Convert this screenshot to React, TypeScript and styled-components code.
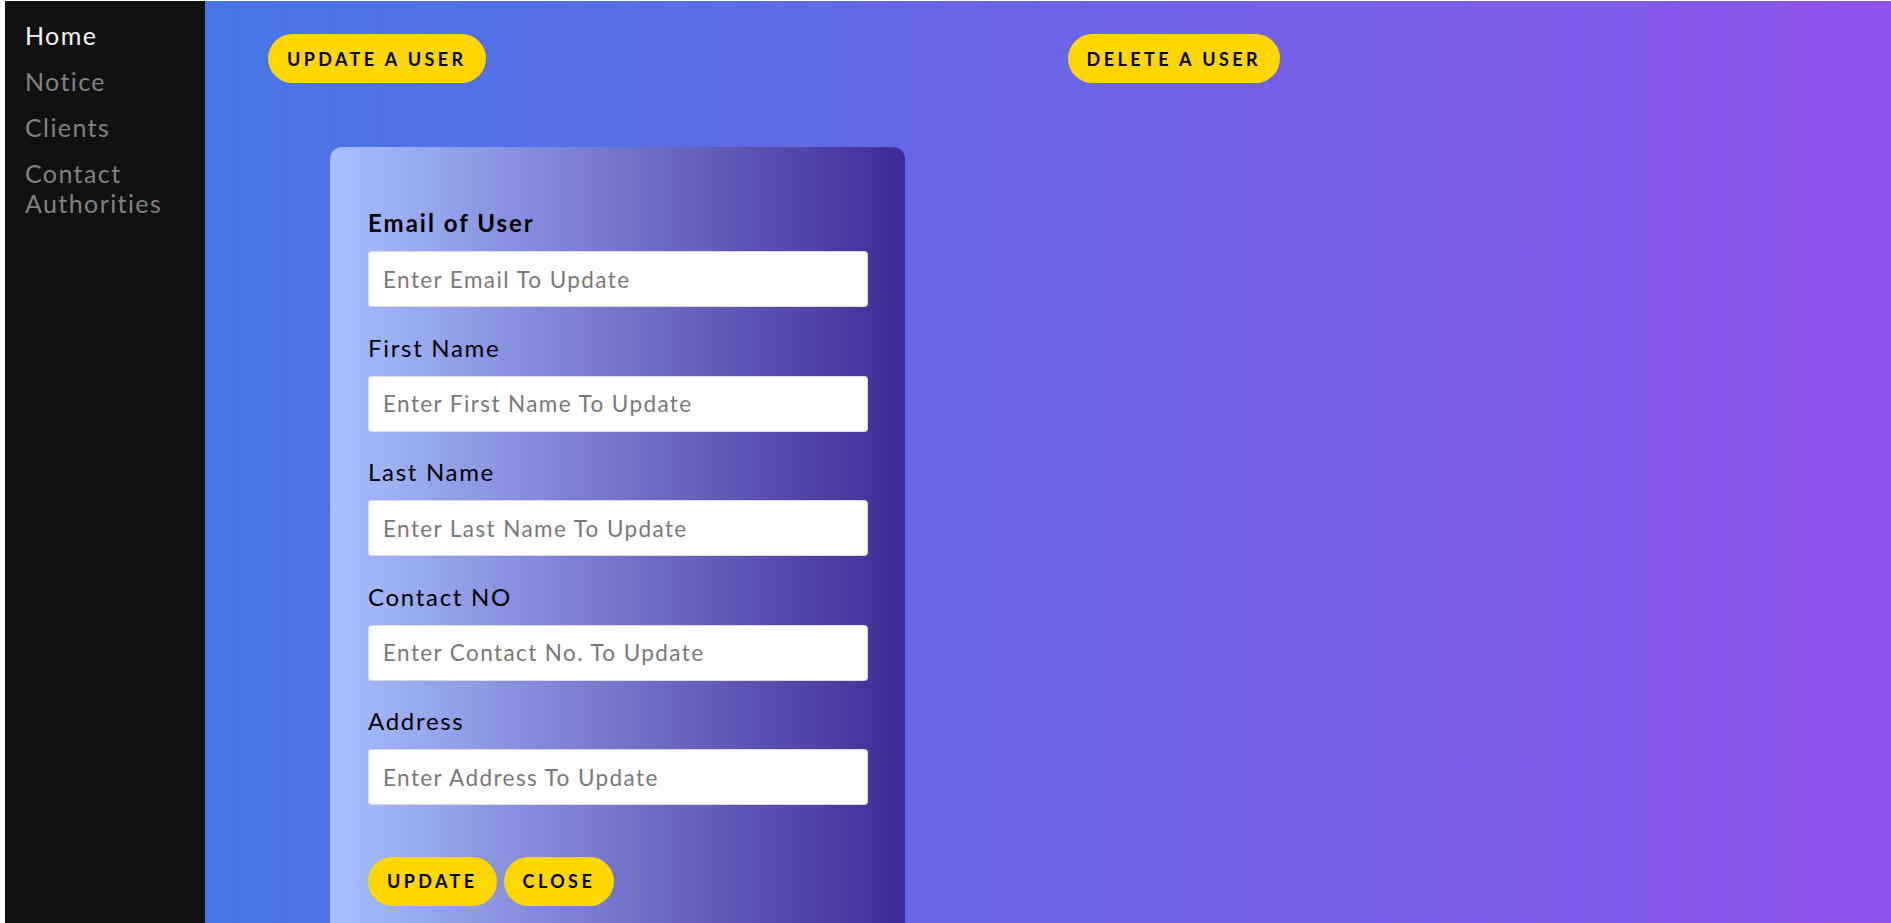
import React from "react";
import styled, { createGlobalStyle } from "styled-components";

const GlobalStyle = createGlobalStyle`
  html, body { margin: 0; padding: 0; }
  body { background: #ffffff; font-family: "Lato", "Noto Sans", sans-serif; }
  * { box-sizing: border-box; }
`;

const Shell = styled.div`
  display: flex;
  height: 100vh;
  padding: 1px 0 0 5px;
  background: #ffffff;
  overflow: hidden;
`;

const Sidebar = styled.nav`
  flex: 0 0 200px;
  background: #111111;
  padding-top: 11px;
  display: flex;
  flex-direction: column;
`;

const NavLink = styled.a<{ $active?: boolean }>`
  display: block;
  padding: 8px 8px 8px 20px;
  font-family: "Lato", "Noto Sans", sans-serif;
  font-size: 25px;
  line-height: 30px;
  letter-spacing: 1.4px;
  color: ${(p) => (p.$active ? "#f4f4f4" : "#818181")};
  text-decoration: none;
  cursor: pointer;
`;

const Main = styled.main`
  flex: 1;
  background: linear-gradient(to right, #4776e6, #8e54e9);
  padding-top: 33px;
  overflow: hidden;
`;

const TopBar = styled.div`
  display: flex;
  padding-left: 63px;
  gap: 582px;
`;

const PillButton = styled.button`
  height: 49px;
  padding: 0 19px;
  border: none;
  border-radius: 25px;
  background: #ffd700;
  color: #000000;
  font-family: "Lato", "Noto Sans", sans-serif;
  font-weight: 700;
  font-size: 18px;
  letter-spacing: 3.4px;
  text-transform: uppercase;
  cursor: pointer;
`;

const Card = styled.section`
  margin: 64px 0 0 125px;
  width: 575px;
  padding: 61px 37px 80px 38px;
  border-radius: 12px;
  background: linear-gradient(to right, #a8c0ff, #3f2b96);
  display: flex;
  flex-direction: column;
  gap: 25.5px;
`;

const Field = styled.div`
  display: flex;
  flex-direction: column;
`;

const Label = styled.label<{ $bold?: boolean }>`
  display: block;
  font-family: "Lato", "Noto Sans", sans-serif;
  font-size: 24px;
  line-height: 30px;
  font-weight: ${(p) => (p.$bold ? 700 : 400)};
  letter-spacing: ${(p) => (p.$bold ? "2px" : "1.7px")};
  color: #000000;
  margin-bottom: 13px;
`;

const Input = styled.input`
  width: 500px;
  height: 56px;
  padding: 0 14px;
  border: 1px solid rgba(0, 0, 0, 0.14);
  border-radius: 4px;
  background: #ffffff;
  font-family: "Lato", "Noto Sans", sans-serif;
  font-size: 22.5px;
  letter-spacing: 1.4px;
  color: #222;
  outline: none;
  &::placeholder {
    color: #787878;
  }
`;

const Actions = styled.div`
  display: flex;
  gap: 7px;
  margin-top: 26px;
`;

const fields = [
  { label: "Email of User", placeholder: "Enter Email To Update", bold: true },
  { label: "First Name", placeholder: "Enter First Name To Update" },
  { label: "Last Name", placeholder: "Enter Last Name To Update" },
  { label: "Contact NO", placeholder: "Enter Contact No. To Update" },
  { label: "Address", placeholder: "Enter Address To Update" },
];

export default function App() {
  return (
    <>
      <GlobalStyle />
      <Shell>
        <Sidebar>
          <NavLink $active>Home</NavLink>
          <NavLink>Notice</NavLink>
          <NavLink>Clients</NavLink>
          <NavLink>Contact Authorities</NavLink>
        </Sidebar>
        <Main>
          <TopBar>
            <PillButton>Update a user</PillButton>
            <PillButton>Delete a user</PillButton>
          </TopBar>
          <Card>
            {fields.map((f) => (
              <Field key={f.label}>
                <Label $bold={f.bold}>{f.label}</Label>
                <Input placeholder={f.placeholder} />
              </Field>
            ))}
            <Actions>
              <PillButton>Update</PillButton>
              <PillButton>Close</PillButton>
            </Actions>
          </Card>
        </Main>
      </Shell>
    </>
  );
}
